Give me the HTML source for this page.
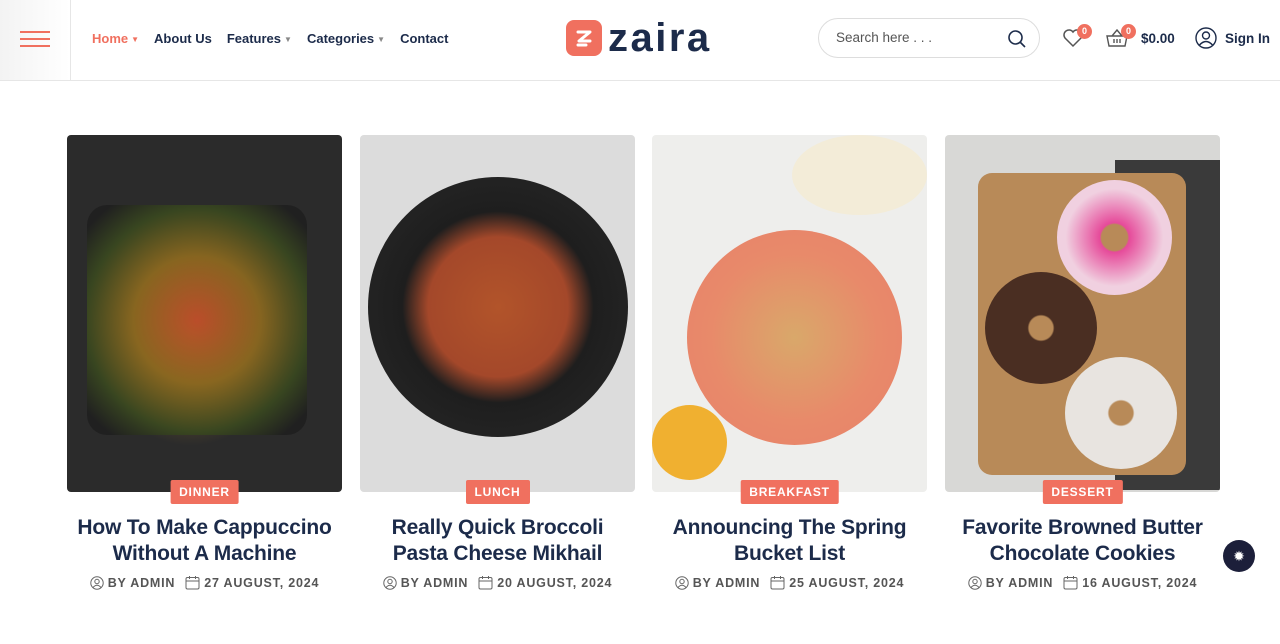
<!DOCTYPE html>
<html><head><meta charset="utf-8"><style>
*{margin:0;padding:0;box-sizing:border-box}
body{width:1280px;height:644px;overflow:hidden;background:#fff;font-family:"Liberation Sans",sans-serif;color:#1c2b4a;position:relative}
.hdr{position:absolute;left:0;top:0;width:1280px;height:81px;border-bottom:1px solid #e6e6e6;background:#fff}
.burger{position:absolute;left:0;top:0;width:71px;height:80px;border-right:1px solid #e6e6e6;background:linear-gradient(90deg,#f3f3f3,#fff)}
.burger i{position:absolute;left:20px;width:30px;height:2px;background:#f0705f}
nav{position:absolute;left:92px;top:31px;font-size:13px;font-weight:bold;display:flex;gap:15px;color:#1c2b4a}
nav span.c{font-size:8px;margin-left:3px;color:#888;vertical-align:1px}
.logo{position:absolute;left:566px;top:20px;display:flex;align-items:center}
.logo .ic{width:36px;height:36px;border-radius:8px;background:#f0705f;position:relative}
.logo b{font-size:40px;color:#1c2b4a;margin-left:6px;line-height:36px;letter-spacing:2.5px}
.search{position:absolute;left:818px;top:18px;width:222px;height:40px;border:1px solid #ddd;border-radius:20px;font-size:13.5px;color:#555;padding:11px 0 0 17px}
.badge{position:absolute;width:15px;height:15px;border-radius:50%;background:#f0705f;color:#fff;font-size:9px;font-weight:bold;text-align:center;line-height:15px}
.card{position:absolute;top:135px;width:275px}
.img{height:357px;border-radius:4px;overflow:hidden;position:relative}
.tag{position:absolute;top:345px;left:50%;transform:translateX(-50%);background:#f0705f;color:#fff;font-size:12px;font-weight:bold;letter-spacing:.8px;padding:5px 9px;border-radius:2px}
h3{margin-top:23px;text-align:center;font-size:21px;line-height:26px;color:#1c2b4a;letter-spacing:-.2px;white-space:nowrap}
.meta{margin-top:8px;text-align:center;font-size:12.5px;font-weight:bold;color:#555;letter-spacing:.8px;display:flex;justify-content:center;gap:10px;align-items:center}
.meta svg{vertical-align:-3px;margin-right:4px}
.dot{position:absolute;left:1223px;top:540px;width:32px;height:32px;border-radius:50%;background:#1c1f3a;color:#fff;font-size:14px;text-align:center;line-height:32px}
</style></head><body>
<div class="hdr">
 <div class="burger"><i style="top:31px"></i><i style="top:38px"></i><i style="top:45px"></i></div>
 <nav><span style="color:#f0705f">Home<span class="c" style="color:#f0705f">&#9660;</span></span><span>About Us</span><span>Features<span class="c">&#9660;</span></span><span>Categories<span class="c">&#9660;</span></span><span>Contact</span></nav>
 <div class="logo"><div class="ic"><svg width="36" height="36" viewBox="0 0 36 36"><path d="M12 12 L24 12 L13 21 L24 21 M12 25 L20 25" stroke="#fff" stroke-width="3" fill="none" stroke-linecap="round" stroke-linejoin="round"/></svg></div><b>zaira</b></div>
 <div class="search">Search here . . .<svg style="position:absolute;right:12px;top:10px" width="20" height="20" viewBox="0 0 20 20"><circle cx="8.5" cy="8.5" r="6.5" stroke="#1c2b4a" stroke-width="1.6" fill="none"/><path d="M13.5 13.5 L18 18" stroke="#1c2b4a" stroke-width="1.6"/></svg></div>
 <svg style="position:absolute;left:1062px;top:28px" width="22" height="20" viewBox="0 0 22 20"><path d="M11 18 L3 10 A4.5 4.5 0 0 1 11 4 A4.5 4.5 0 0 1 19 10 Z" stroke="#555" stroke-width="1.5" fill="none"/></svg>
 <div class="badge" style="left:1077px;top:24px">0</div>
 <svg style="position:absolute;left:1106px;top:28px" width="22" height="20" viewBox="0 0 22 20"><path d="M1 8 H21 L19 18 H3 Z M6 8 L11 2 L16 8 M8 11v4M11 11v4M14 11v4" stroke="#555" stroke-width="1.4" fill="none"/></svg>
 <div class="badge" style="left:1121px;top:24px">0</div>
 <div style="position:absolute;left:1141px;top:31px;font-size:13.5px;font-weight:bold">$0.00</div>
 <svg style="position:absolute;left:1195px;top:27px" width="22" height="22" viewBox="0 0 22 22"><circle cx="11" cy="11" r="10" stroke="#1c2b4a" stroke-width="1.4" fill="none"/><circle cx="11" cy="8.5" r="3.5" stroke="#1c2b4a" stroke-width="1.4" fill="none"/><path d="M4.5 18 Q11 11 17.5 18" stroke="#1c2b4a" stroke-width="1.4" fill="none"/></svg>
 <div style="position:absolute;left:1225px;top:31px;font-size:13.5px;font-weight:bold">Sign In</div>
</div>

<div class="card" style="left:67px"><div class="img" style="background:radial-gradient(ellipse 45% 40% at 45% 55%,#8a6b2a 0%,#5a4a2a 50%,#2b2b2b 80%),#262626"><div style="position:absolute;left:20px;top:70px;width:220px;height:230px;border-radius:20px;background:radial-gradient(circle at 50% 50%,#c4492a,#8f6a1e 40%,#3a4a1e 70%,#1e1e1e 90%);opacity:.85"></div></div><div class="tag">DINNER</div><h3>How To Make Cappuccino<br>Without A Machine</h3><div class="meta"><span><svg width="14" height="14" viewBox="0 0 14 14"><circle cx="7" cy="7" r="6.2" stroke="#666" fill="none"/><circle cx="7" cy="5.5" r="2.2" stroke="#666" fill="none"/><path d="M3 11.5 Q7 7 11 11.5" stroke="#666" fill="none"/></svg>BY ADMIN</span><span><svg width="15" height="15" viewBox="0 0 15 15"><rect x="1" y="2.5" width="13" height="11.5" rx="1.5" stroke="#666" fill="none"/><path d="M1 6h13M4.5 1v3M10.5 1v3" stroke="#666"/></svg>27 AUGUST, 2024</span></div></div>

<div class="card" style="left:360px"><div class="img" style="background:#dcdcdc"><div style="position:absolute;left:8px;top:42px;width:260px;height:260px;border-radius:50%;background:radial-gradient(circle,#b2542a 0%,#a4482a 38%,#1e1e1e 52%,#2a2a2a 100%)"></div></div><div class="tag">LUNCH</div><h3>Really Quick Broccoli<br>Pasta Cheese Mikhail</h3><div class="meta"><span><svg width="14" height="14" viewBox="0 0 14 14"><circle cx="7" cy="7" r="6.2" stroke="#666" fill="none"/><circle cx="7" cy="5.5" r="2.2" stroke="#666" fill="none"/><path d="M3 11.5 Q7 7 11 11.5" stroke="#666" fill="none"/></svg>BY ADMIN</span><span><svg width="15" height="15" viewBox="0 0 15 15"><rect x="1" y="2.5" width="13" height="11.5" rx="1.5" stroke="#666" fill="none"/><path d="M1 6h13M4.5 1v3M10.5 1v3" stroke="#666"/></svg>20 AUGUST, 2024</span></div></div>

<div class="card" style="left:652px"><div class="img" style="background:#eeeeec"><div style="position:absolute;left:35px;top:95px;width:215px;height:215px;border-radius:50%;background:radial-gradient(circle,#d9a86a 0%,#e88a6a 55%,#e8806a 100%)"></div><div style="position:absolute;left:140px;top:0;width:135px;height:80px;border-radius:50%;background:#f3ecd8"></div><div style="position:absolute;left:0;top:270px;width:75px;height:75px;border-radius:50%;background:#f0b030"></div></div><div class="tag">BREAKFAST</div><h3>Announcing The Spring<br>Bucket List</h3><div class="meta"><span><svg width="14" height="14" viewBox="0 0 14 14"><circle cx="7" cy="7" r="6.2" stroke="#666" fill="none"/><circle cx="7" cy="5.5" r="2.2" stroke="#666" fill="none"/><path d="M3 11.5 Q7 7 11 11.5" stroke="#666" fill="none"/></svg>BY ADMIN</span><span><svg width="15" height="15" viewBox="0 0 15 15"><rect x="1" y="2.5" width="13" height="11.5" rx="1.5" stroke="#666" fill="none"/><path d="M1 6h13M4.5 1v3M10.5 1v3" stroke="#666"/></svg>25 AUGUST, 2024</span></div></div>

<div class="card" style="left:945px"><div class="img" style="background:#d8d8d6"><div style="position:absolute;left:170px;top:25px;width:105px;height:330px;background:#3a3a3a"></div><div style="position:absolute;left:33px;top:38px;width:208px;height:302px;border-radius:14px;background:#b88a58"></div><div style="position:absolute;left:112px;top:45px;width:115px;height:115px;border-radius:50%;background:radial-gradient(circle,#b88a58 16%,#e64a9a 18%,#f0d0e0 60%)"></div><div style="position:absolute;left:40px;top:137px;width:112px;height:112px;border-radius:50%;background:radial-gradient(circle,#b88a58 15%,#4a2e22 17%)"></div><div style="position:absolute;left:120px;top:222px;width:112px;height:112px;border-radius:50%;background:radial-gradient(circle,#b88a58 15%,#e8e4e0 17%)"></div></div><div class="tag">DESSERT</div><h3>Favorite Browned Butter<br>Chocolate Cookies</h3><div class="meta"><span><svg width="14" height="14" viewBox="0 0 14 14"><circle cx="7" cy="7" r="6.2" stroke="#666" fill="none"/><circle cx="7" cy="5.5" r="2.2" stroke="#666" fill="none"/><path d="M3 11.5 Q7 7 11 11.5" stroke="#666" fill="none"/></svg>BY ADMIN</span><span><svg width="15" height="15" viewBox="0 0 15 15"><rect x="1" y="2.5" width="13" height="11.5" rx="1.5" stroke="#666" fill="none"/><path d="M1 6h13M4.5 1v3M10.5 1v3" stroke="#666"/></svg>16 AUGUST, 2024</span></div></div>

<div class="dot">&#10041;</div>
</body></html>
